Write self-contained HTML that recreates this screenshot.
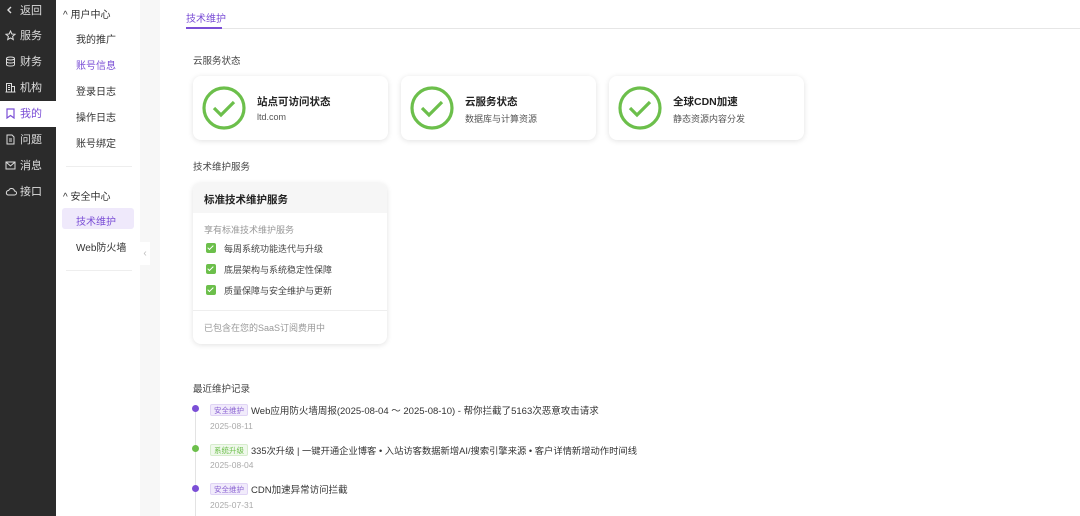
<!DOCTYPE html>
<html><head><meta charset="utf-8"><style>
*{margin:0;padding:0;box-sizing:border-box}
body{width:1080px;height:516px;overflow:hidden;background:#f7f7f7;font-family:"Liberation Sans","Noto Sans CJK SC",sans-serif;color:#333;position:relative}
.side{position:absolute;left:0;top:0;width:56px;height:516px;background:#2b2b2b}
.side .it{position:absolute;left:0;width:56px;height:26px;color:#ddd;font-size:11px;line-height:26px;padding-left:20px}
.side .it svg{position:absolute;left:5px;top:7px}
.side .act{background:#fff;color:#7b4fd6}
.nav{position:absolute;left:56px;top:0;width:84px;height:516px;background:#fff}
.nav div{position:absolute;font-size:10px;color:#333}
.main{position:absolute;left:160px;top:0;width:920px;height:516px;background:#fff}
.abs{position:absolute}
.card{position:absolute;background:#fff;border-radius:8px;box-shadow:0 1px 6px rgba(0,0,0,.12)}
.t1{font-size:10.5px;font-weight:bold;color:#222}
.t2{font-size:9px;color:#555}
.tag{display:inline-block;font-size:7.5px;padding:0 3px;height:12px;line-height:11px;border-radius:2px;margin-right:3px;vertical-align:1px}
.tp{background:#f1ebfb;color:#8a63d2;border:1px solid #e0d4f5}
.tg{background:#f0f8ec;color:#6cbf4b;border:1px solid #d6edcc}
.cb{display:inline-block;width:10px;height:10px;background:#6cbf4b;border-radius:2px;vertical-align:-1px;margin-right:8px;position:relative}
.cb:after{content:"";position:absolute;left:3px;top:1px;width:2px;height:5px;border:solid #fff;border-width:0 1.3px 1.3px 0;transform:rotate(45deg)}
</style></head><body>
<div class="side">
<div class="it" style="top:-2px">返回<svg width="10" height="10"><path d="M6 2 L3 5 L6 8" stroke="#ddd" fill="none" stroke-width="1.4"/></svg></div>
<div class="it" style="top:23px">服务<svg width="11" height="11"><path d="M5.5 1 L6.9 4 L10 4.3 L7.6 6.4 L8.3 9.6 L5.5 8 L2.7 9.6 L3.4 6.4 L1 4.3 L4.1 4 Z" stroke="#ddd" fill="none"/></svg></div>
<div class="it" style="top:49px">财务<svg width="11" height="11"><ellipse cx="5.5" cy="2.5" rx="4" ry="1.5" stroke="#ddd" fill="none"/><path d="M1.5 2.5v6c0 2 8 2 8 0v-6M1.5 5.5c0 2 8 2 8 0" stroke="#ddd" fill="none"/></svg></div>
<div class="it" style="top:75px">机构<svg width="11" height="11"><path d="M1.5 10V1.5h5V10M6.5 4.5h3V10M0.5 10h10M3 3.5h2M3 5.5h2M3 7.5h2" stroke="#ddd" fill="none"/></svg></div>
<div class="it act" style="top:101px">我的<svg width="11" height="11"><path d="M2 1h7v9L5.5 7.5 2 10Z" stroke="#7b4fd6" fill="none" stroke-width="1.2"/></svg></div>
<div class="it" style="top:127px">问题<svg width="11" height="11"><path d="M2 1h5l2 2v7H2Z M4 5h3M4 7h3" stroke="#ddd" fill="none"/></svg></div>
<div class="it" style="top:153px">消息<svg width="11" height="11"><rect x="1" y="2" width="9" height="7" stroke="#ddd" fill="none"/><path d="M1 2l4.5 4 4.5-4" stroke="#ddd" fill="none"/></svg></div>
<div class="it" style="top:179px">接口<svg width="12" height="11"><path d="M3 9h6.5a2 2 0 0 0 0-4 3 3 0 0 0-5.8-.5A2.3 2.3 0 0 0 3 9Z" stroke="#ddd" fill="none"/></svg></div>
</div>
<div class="nav">
<div style="left:7px;top:6px;color:#333">^ 用户中心</div>
<div style="left:20px;top:31px">我的推广</div>
<div style="left:20px;top:57px;color:#7b4fd6">账号信息</div>
<div style="left:20px;top:83px">登录日志</div>
<div style="left:20px;top:109px">操作日志</div>
<div style="left:20px;top:135px">账号绑定</div>
<div style="left:10px;top:166px;width:66px;height:1px;background:#eee"></div>
<div style="left:7px;top:188px">^ 安全中心</div>
<div style="left:6px;top:208px;width:72px;height:21px;background:#efe9fb;border-radius:3px"></div>
<div style="left:20px;top:213px;color:#7b4fd6">技术维护</div>
<div style="left:20px;top:239px">Web防火墙</div>
<div style="left:10px;top:270px;width:66px;height:1px;background:#eee"></div>
</div>
<div class="abs" style="left:140px;top:242px;width:10px;height:23px;background:#fff;color:#bbb;font-size:10px;line-height:23px;text-align:center">‹</div>
<div class="main">
<div class="abs" style="left:26px;top:10px;font-size:10px;color:#7b4fd6">技术维护</div>
<div class="abs" style="left:26px;top:28px;width:894px;height:1px;background:#e6e6e6"></div>
<div class="abs" style="left:26px;top:27px;width:36px;height:2px;background:#7b4fd6"></div>
<div class="abs" style="left:33px;top:53px;font-size:9.5px;color:#444">云服务状态</div>

<div class="card" style="left:33px;top:76px;width:195px;height:64px">
<svg class="abs" style="left:9px;top:10px" width="44" height="44"><circle cx="22" cy="22" r="20" stroke="#6cbf4b" stroke-width="3.2" fill="none"/><path d="M12 22l7 7 13-13" stroke="#6cbf4b" stroke-width="3.2" fill="none"/></svg>
<div class="abs t1" style="left:64px;top:18px">站点可访问状态</div><div class="abs t2" style="left:64px;top:36px">ltd.com</div></div>
<div class="card" style="left:241px;top:76px;width:195px;height:64px">
<svg class="abs" style="left:9px;top:10px" width="44" height="44"><circle cx="22" cy="22" r="20" stroke="#6cbf4b" stroke-width="3.2" fill="none"/><path d="M12 22l7 7 13-13" stroke="#6cbf4b" stroke-width="3.2" fill="none"/></svg>
<div class="abs t1" style="left:64px;top:18px">云服务状态</div><div class="abs t2" style="left:64px;top:36px">数据库与计算资源</div></div>
<div class="card" style="left:449px;top:76px;width:195px;height:64px">
<svg class="abs" style="left:9px;top:10px" width="44" height="44"><circle cx="22" cy="22" r="20" stroke="#6cbf4b" stroke-width="3.2" fill="none"/><path d="M12 22l7 7 13-13" stroke="#6cbf4b" stroke-width="3.2" fill="none"/></svg>
<div class="abs t1" style="left:64px;top:18px">全球CDN加速</div><div class="abs t2" style="left:64px;top:36px">静态资源内容分发</div></div>

<div class="abs" style="left:33px;top:159px;font-size:9.5px;color:#444">技术维护服务</div>
<div class="card" style="left:33px;top:183px;width:194px;height:161px;overflow:hidden">
<div class="abs" style="left:0;top:0;width:194px;height:30px;background:#f6f6f6"></div>
<div class="abs t1" style="left:11px;top:9px">标准技术维护服务</div>
<div class="abs" style="left:11px;top:40px;font-size:9px;color:#999">享有标准技术维护服务</div>
<div class="abs t2" style="left:13px;top:59px;color:#444"><span class="cb"></span>每周系统功能迭代与升级</div>
<div class="abs t2" style="left:13px;top:80px;color:#444"><span class="cb"></span>底层架构与系统稳定性保障</div>
<div class="abs t2" style="left:13px;top:101px;color:#444"><span class="cb"></span>质量保障与安全维护与更新</div>
<div class="abs" style="left:0;top:127px;width:194px;height:1px;background:#eee"></div>
<div class="abs" style="left:11px;top:138px;font-size:9px;color:#999">已包含在您的SaaS订阅费用中</div>
</div>

<div class="abs" style="left:33px;top:381px;font-size:9.5px;color:#444">最近维护记录</div>
<div class="abs" style="left:35px;top:409px;width:1px;height:107px;background:#e3e3e3"></div>
<div class="abs" style="left:32px;top:405px;width:7px;height:7px;border-radius:50%;background:#7b4fd6"></div>
<div class="abs" style="left:32px;top:445px;width:7px;height:7px;border-radius:50%;background:#6cbf4b"></div>
<div class="abs" style="left:32px;top:485px;width:7px;height:7px;border-radius:50%;background:#7b4fd6"></div>
<div class="abs" style="left:50px;top:403px;font-size:9.5px;color:#333;white-space:nowrap"><span class="tag tp">安全维护</span>Web应用防火墙周报(2025-08-04 ～ 2025-08-10) - 帮你拦截了5163次恶意攻击请求</div>
<div class="abs" style="left:50px;top:421px;font-size:8.5px;color:#aaa">2025-08-11</div>
<div class="abs" style="left:50px;top:443px;font-size:9.3px;color:#333;white-space:nowrap"><span class="tag tg">系统升级</span>335次升级 | 一键开通企业博客 • 入站访客数据新增AI/搜索引擎来源 • 客户详情新增动作时间线</div>
<div class="abs" style="left:50px;top:460px;font-size:8.5px;color:#aaa">2025-08-04</div>
<div class="abs" style="left:50px;top:482px;font-size:9.5px;color:#333;white-space:nowrap"><span class="tag tp">安全维护</span>CDN加速异常访问拦截</div>
<div class="abs" style="left:50px;top:500px;font-size:8.5px;color:#aaa">2025-07-31</div>
</div>
</body></html>
